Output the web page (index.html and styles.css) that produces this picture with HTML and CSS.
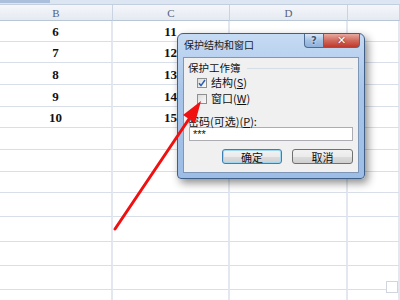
FILE: index.html
```html
<!DOCTYPE html>
<html lang="zh-CN">
<head>
    <meta charset="UTF-8">
    <title>保护结构和窗口</title>
    <link rel="stylesheet" href="styles.css">
</head>
<body>

    <!-- Sheet -->
    <div class="sheet">
        <div class="topstrip"><span class="tab"></span></div>

        <div class="row head">
            <div class="cell">B</div>
            <div class="cell">C</div>
            <div class="cell">D</div>
            <div class="cell"></div>
        </div>
        <div class="row h21"><div class="cell num">6</div><div class="cell num">11</div><div class="cell"></div><div class="cell"></div></div>
        <div class="row h21"><div class="cell num">7</div><div class="cell num">12</div><div class="cell"></div><div class="cell"></div></div>
        <div class="row h22"><div class="cell num">8</div><div class="cell num">13</div><div class="cell"></div><div class="cell"></div></div>
        <div class="row h22"><div class="cell num">9</div><div class="cell num">14</div><div class="cell"></div><div class="cell"></div></div>
        <div class="row h21"><div class="cell num">10</div><div class="cell num">15</div><div class="cell"></div><div class="cell"></div></div>
        <div class="row h22"><div class="cell"></div><div class="cell"></div><div class="cell"></div><div class="cell"></div></div>
        <div class="row h22"><div class="cell"></div><div class="cell"></div><div class="cell"></div><div class="cell"></div></div>
        <div class="row h21"><div class="cell"></div><div class="cell"></div><div class="cell"></div><div class="cell"></div></div>
        <div class="row h24"><div class="cell"></div><div class="cell"></div><div class="cell"></div><div class="cell"></div></div>
        <div class="row h25"><div class="cell"></div><div class="cell"></div><div class="cell"></div><div class="cell"></div></div>
        <div class="row h24"><div class="cell"></div><div class="cell"></div><div class="cell"></div><div class="cell"></div></div>
        <div class="row h24"><div class="cell"></div><div class="cell"></div><div class="cell"></div><div class="cell"><span class="corner"></span></div></div>
        <div class="row h24"><div class="cell"></div><div class="cell"></div><div class="cell"></div><div class="cell"></div></div>
    </div>

    <!-- Dialog -->
    <div class="dialog">
        <div class="titlebar">
            <span class="title">保护结构和窗口</span>
            <div class="caption-btns">
                <span class="cap-btn help">?</span>
                <span class="cap-btn close">&#10005;</span>
            </div>
        </div>
        <div class="client">
            <div class="group-label"><span>保护工作簿</span><span class="group-line"></span></div>
            <label class="check"><span class="box checked">
                <svg width="8" height="8" viewBox="0 0 8 8"><path d="M1 4.2 L3 6.6 L7 1" fill="none" stroke="#2a5db0" stroke-width="1.5"/></svg>
            </span>结构(<u>S</u>)</label>
            <label class="check second"><span class="box"></span>窗口(<u>W</u>)</label>
            <div class="pw-label">密码(可选)(<u>P</u>):</div>
            <div class="input">***</div>
            <div class="buttons">
                <span class="btn default">确定</span>
                <span class="btn">取消</span>
            </div>
        </div>
    </div>

    <!-- Red arrow -->
    <svg class="arrow" width="400" height="300" viewBox="0 0 400 300">
        <line x1="115" y1="229" x2="191" y2="116" stroke="#f01010" stroke-width="3" stroke-linecap="round"/>
        <polygon points="201,101 183,115 195,123" fill="#f01010"/>
    </svg>

</body>
</html>
```

FILE: styles.css
```css
/* Sheet */
body {
    margin: 0;
    width: 400px;
    height: 300px;
    overflow: hidden;
    background-color: #fff;
    font-family: "Noto Sans CJK SC", sans-serif;
    position: relative;
}

.topstrip {
    height: 4px;
    background-color: #dce6f2;
    border-bottom: 1px solid #c3cfdf;
}

.topstrip .tab {
    display: block;
    width: 50px;
    height: 3px;
    background-color: #a9bfdc;
}

.row {
    display: grid;
    grid-template-columns: 113px 117px 118px 52px;
}

.cell {
    box-sizing: border-box;
    border-right: 2px solid #e3e8f0;
    border-bottom: 1px solid #d9dfe9;
    display: flex;
    align-items: center;
    justify-content: center;
    position: relative;
}

.head {
    height: 16px;
    background: linear-gradient(#f4f6fa, #e4e9f1);
}

.head .cell {
    border-right: 1px solid #c9d3e1;
    border-bottom: 1px solid #b9c6d8;
    font-family: "Liberation Serif", serif;
    font-size: 11px;
    color: #56627a;
}

.h21 { height: 21px; }
.h22 { height: 22px; }
.h24 { height: 24px; }
.h25 { height: 25px; }

.num {
    font-family: "Liberation Serif", serif;
    font-weight: bold;
    font-size: 13px;
    color: #111;
    padding-top: 2px;
}

.corner {
    position: absolute;
    right: 0;
    bottom: -4px;
    width: 10px;
    height: 10px;
    border: 1px solid #d0d6df;
    background-color: #fff;
}

/* Dialog */
.dialog {
    position: absolute;
    left: 177px;
    top: 33px;
    width: 188px;
    height: 146px;
    box-sizing: border-box;
    border: 1px solid #3f5f86;
    border-radius: 6px 6px 4px 4px;
    background: linear-gradient(#c6dbf3, #a9c5e9 40%, #9dbde6);
    box-shadow: 3px 4px 8px rgba(0, 0, 0, 0.45);
    padding: 0 5px 5px 5px;
    display: flex;
    flex-direction: column;
}

.titlebar {
    height: 23px;
    display: flex;
    align-items: flex-start;
}

.title {
    font-size: 10px;
    line-height: 12px;
    margin-top: 5px;
    margin-left: 1px;
    color: #1a1a1a;
    flex: 1;
}

.caption-btns {
    display: flex;
}

.cap-btn {
    height: 14px;
    box-sizing: border-box;
    border: 1px solid #4d6b90;
    border-top: none;
    display: flex;
    align-items: center;
    justify-content: center;
    font-family: "DejaVu Sans", sans-serif;
    font-weight: bold;
    color: #fff;
}

.help {
    width: 20px;
    border-radius: 0 0 0 4px;
    background: linear-gradient(#d7e6f7, #a5c1e3 50%, #8fb0db);
    font-size: 10px;
    color: #3d5673;
    text-shadow: 0 0 2px #fff;
}

.close {
    width: 36px;
    margin-right: -1px;
    border-left: none;
    border-radius: 0 0 4px 0;
    background: linear-gradient(#e9a99f, #d06a5d 50%, #c0392b);
    font-size: 11px;
    text-shadow: 0 0 2px #7a2018;
}

.client {
    flex: 1;
    box-sizing: border-box;
    background-color: #f0f0f0;
    border: 1px solid #7e97b6;
    padding: 4px 5px 0 4px;
    font-size: 11px;
    color: #111;
}

.group-label {
    display: flex;
    align-items: center;
    height: 12px;
    line-height: 12px;
    font-size: 10.5px;
}

.group-line {
    flex: 1;
    height: 1px;
    margin-left: 6px;
    background-color: #d5dfe5;
}

.check {
    display: flex;
    align-items: center;
    height: 13px;
    line-height: 13px;
    margin-top: 2px;
    margin-left: 9px;
}

.check.second {
    margin-top: 3px;
}

.check u, .pw-label u {
    text-decoration: underline;
}

.box {
    width: 10px;
    height: 10px;
    box-sizing: border-box;
    border: 1px solid #8e8f8f;
    background: linear-gradient(135deg, #dcdcdc, #fafafa);
    margin-right: 4px;
    display: flex;
    align-items: center;
    justify-content: center;
}

.pw-label {
    margin-top: 10px;
    height: 12px;
    line-height: 12px;
}

.input {
    width: 164px;
    height: 14px;
    box-sizing: border-box;
    border: 1px solid #abadb3;
    background-color: #fff;
    font-family: "Liberation Sans", sans-serif;
    font-size: 11px;
    line-height: 12px;
    padding-left: 3px;
    margin-left: 1px;
}

.buttons {
    display: flex;
    justify-content: flex-end;
    gap: 10px;
    margin-top: 8px;
}

.btn {
    width: 61px;
    height: 15px;
    box-sizing: border-box;
    border: 1px solid #707070;
    border-radius: 3px;
    background: linear-gradient(#f2f2f2 0%, #ebebeb 50%, #dddddd 51%, #cfcfcf 100%);
    display: flex;
    align-items: center;
    justify-content: center;
    font-size: 11px;
}

.btn.default {
    width: 60px;
    border-color: #3c7fb1;
    box-shadow: inset 0 0 0 1px #9fd6f0;
}

/* Arrow overlay */
.arrow {
    position: absolute;
    left: 0;
    top: 0;
    pointer-events: none;
}
```
